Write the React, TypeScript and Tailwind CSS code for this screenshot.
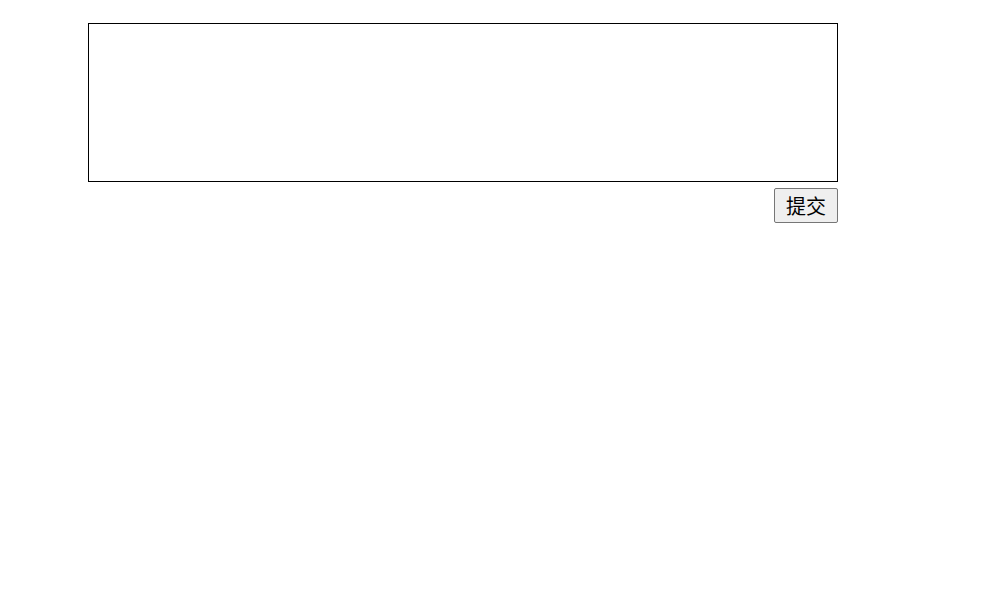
import React from 'react';

export default function App() {
  return (
    <div className="min-h-[595px] bg-white pt-[23px] pl-[88px]">
      <div className="flex w-[750px] flex-col">
        <textarea className="h-[159px] w-[750px] resize-none border border-black bg-white outline-none" />
        <div className="mt-[6px] flex justify-end">
          <button
            type="button"
            className="h-[35px] w-[64px] rounded-[2px] border border-[#767676] bg-[#efefef] text-[20px] leading-none text-black"
            style={{ fontFamily: '"Noto Sans CJK SC", sans-serif' }}
          >
            提交
          </button>
        </div>
      </div>
    </div>
  );
}
